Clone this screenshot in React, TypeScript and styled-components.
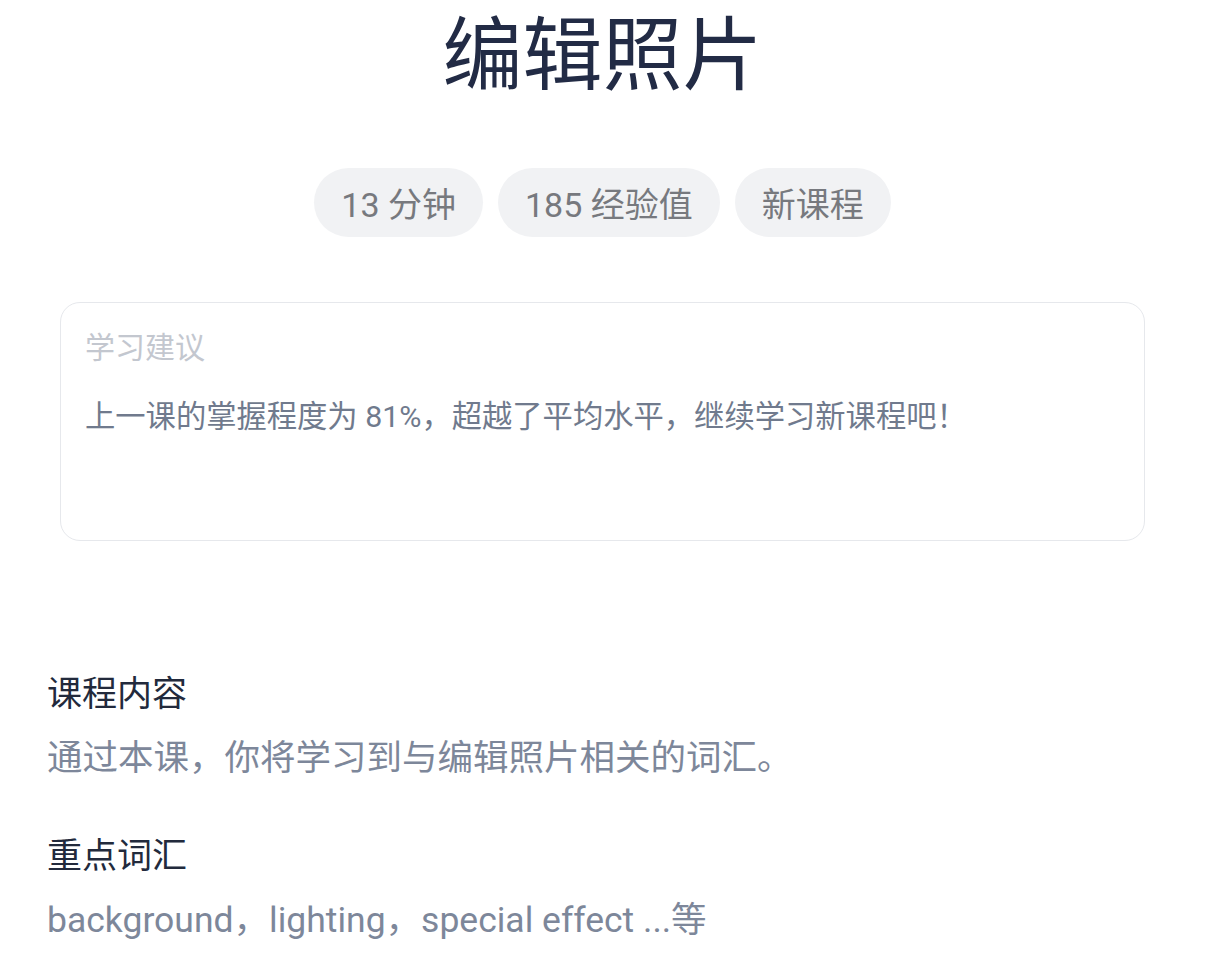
import React from "react";
import styled, { createGlobalStyle } from "styled-components";

const Global = createGlobalStyle`
  html, body { margin: 0; padding: 0; background: #ffffff; }
  body { font-family: Roboto, "Noto Sans CJK SC", sans-serif; }
`;

const Page = styled.div`
  display: flex;
  flex-direction: column;
  width: 1205px;
  min-height: 973px;
  box-sizing: border-box;
`;

const Title = styled.h1`
  margin: 0;
  font-size: 80px;
  line-height: 112px;
  font-weight: 400;
  color: #222b45;
  text-align: center;
`;

const ChipRow = styled.div`
  display: flex;
  justify-content: center;
  gap: 15px;
  margin-top: 56px;
`;

const Chip = styled.span`
  display: inline-flex;
  align-items: center;
  height: 69px;
  padding: 0 27px;
  border-radius: 35px;
  background: #f1f2f4;
  color: #77797e;
  font-size: 34px;
`;

const Card = styled.section`
  margin: 65px 60px 0;
  height: 239px;
  box-sizing: border-box;
  border: 1px solid #e6e8ec;
  border-radius: 20px;
  padding: 22px 24px 0;
  display: flex;
  flex-direction: column;
  gap: 24px;
`;

const CardLabel = styled.div`
  font-size: 30px;
  line-height: 45px;
  color: #c3c7cf;
`;

const CardBody = styled.div`
  font-size: 30.3px;
  line-height: 45px;
  color: #707a8d;
`;

const Sections = styled.div`
  display: flex;
  flex-direction: column;
  gap: 45px;
  margin-top: 127px;
  padding-left: 47px;
`;

const Section = styled.div`
  display: flex;
  flex-direction: column;
  gap: 9px;
`;

const Heading = styled.h2`
  margin: 0;
  font-size: 35px;
  line-height: 54px;
  font-weight: 400;
  color: #222a3c;
`;

const Desc = styled.p`
  margin: 0;
  font-size: 35.5px;
  line-height: 54px;
  color: #7d879a;
`;

export default function App() {
  return (
    <>
      <Global />
      <Page>
        <Title>编辑照片</Title>
        <ChipRow>
          <Chip>13 分钟</Chip>
          <Chip>185 经验值</Chip>
          <Chip>新课程</Chip>
        </ChipRow>
        <Card>
          <CardLabel>学习建议</CardLabel>
          <CardBody>上一课的掌握程度为 81%，超越了平均水平，继续学习新课程吧！</CardBody>
        </Card>
        <Sections>
          <Section>
            <Heading>课程内容</Heading>
            <Desc>通过本课，你将学习到与编辑照片相关的词汇。</Desc>
          </Section>
          <Section>
            <Heading>重点词汇</Heading>
            <Desc>background，lighting，special effect ...等</Desc>
          </Section>
        </Sections>
      </Page>
    </>
  );
}
